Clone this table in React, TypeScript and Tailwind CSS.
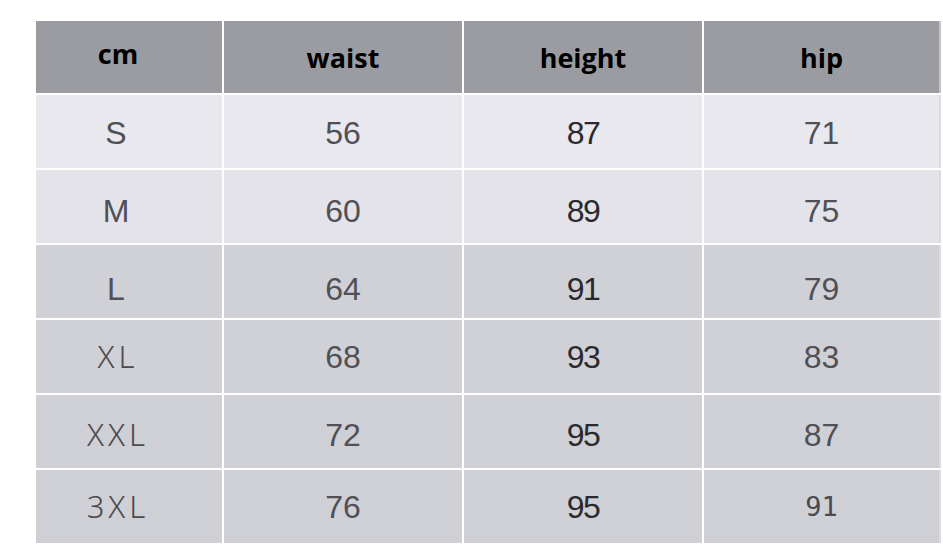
import React from "react";

type Cell = { t: string; cls?: string };

const rows: { bg: string; off: string; cells: Cell[] }[] = [
  { bg: "bg-[#e8e8ee]", off: "pt-[3px]", cells: [{ t: "S" }, { t: "56" }, { t: "87", cls: "h" }, { t: "71" }] },
  { bg: "bg-[#e3e3e9]", off: "pt-[8px]", cells: [{ t: "M" }, { t: "60" }, { t: "89", cls: "h" }, { t: "75" }] },
  { bg: "bg-[#d0d0d7]", off: "pt-[14px]", cells: [{ t: "L" }, { t: "64" }, { t: "91", cls: "h" }, { t: "79" }] },
  { bg: "bg-[#d0d0d7]", off: "pt-[0px]", cells: [{ t: "XL", cls: "x" }, { t: "68" }, { t: "93", cls: "h" }, { t: "83" }] },
  { bg: "bg-[#cfcfd6]", off: "pt-[6px]", cells: [{ t: "XXL", cls: "x" }, { t: "72" }, { t: "95", cls: "h" }, { t: "87" }] },
  { bg: "bg-[#cfcfd6]", off: "pt-[0px]", cells: [{ t: "3XL", cls: "x" }, { t: "76" }, { t: "95", cls: "h" }, { t: "91", cls: "m" }] },
];

const headers = ["cm", "waist", "height", "hip"];

function textClass(c?: string) {
  if (c === "h") return "font-['Liberation_Sans',sans-serif] text-[32px] text-[#2a2a2e] tracking-[-1.5px]";
  if (c === "x") return "font-['Noto_Sans',sans-serif] font-light text-[31px] text-[#4a4a50] tracking-[4px]";
  if (c === "m") return "font-['DejaVu_Sans_Mono',monospace] text-[27px] text-[#4a4a50]";
  return "font-['Liberation_Sans',sans-serif] text-[32px] text-[#505056]";
}

export default function App() {
  return (
    <div className="w-[943px] h-[555px] bg-white pt-[21px] pl-[36px] overflow-hidden">
      <div className="grid grid-cols-[186px_238px_238px_237px] gap-[2px] bg-white w-[905px]">
        {headers.map((h, i) => (
          <div
            key={h}
            className={`h-[72px] bg-[#9b9ca1] flex items-center justify-center font-['Open_Sans',sans-serif] font-bold text-[27px] text-black ${i === 0 ? "pr-[22px] pb-[5px]" : "pt-[3px]"} ${i === 3 ? "border-r-2 border-[#c4c4c8]" : ""}`}
          >
            {h}
          </div>
        ))}
        {rows.map((r, ri) =>
          r.cells.map((c, ci) => (
            <div
              key={`${ri}-${ci}`}
              className={`h-[73px] ${r.bg} flex items-center justify-center ${r.off} ${ci === 0 ? "pr-[26px]" : ""} ${ci === 3 ? "border-r-2 border-[#dcdce0]" : ""}`}
            >
              <span className={`leading-none ${textClass(c.cls)} ${c.cls === "x" ? "pl-[4px]" : ""}`}>{c.t}</span>
            </div>
          ))
        )}
      </div>
    </div>
  );
}
